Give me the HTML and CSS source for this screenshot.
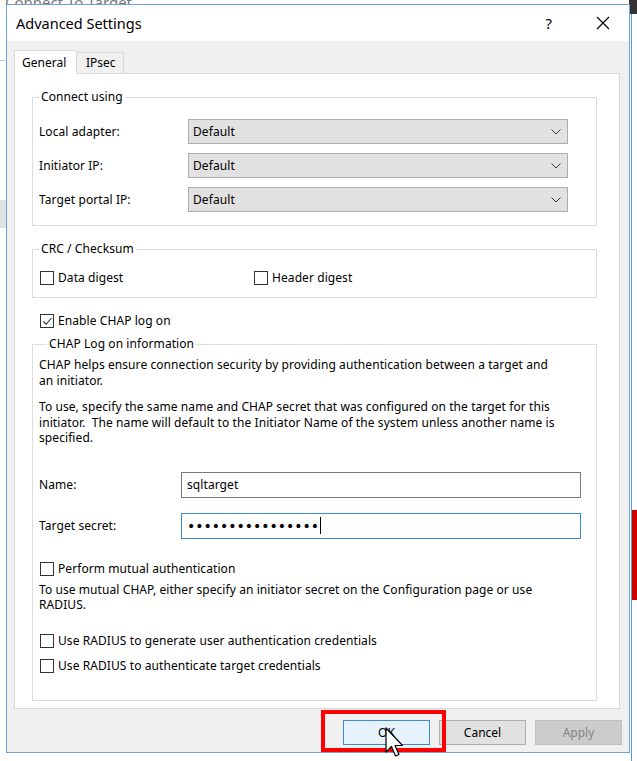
FILE: index.html
```html
<!DOCTYPE html>
<html>
<head>
<meta charset="utf-8">
<link rel="stylesheet" href="styles.css">
</head>
<body>
<div class="desktop">
  <div class="bg-window">
    <div class="bg-title">Connect To Target</div>
    <div class="bg-line l1"></div>
    <div class="bg-line l2"></div>
  </div>
  <div class="bg-right">
    <div class="bg-dark"></div>
    <div class="bg-blue"></div>
    <div class="bg-red"></div>
  </div>

  <div class="dialog">
    <div class="titlebar">
      <span class="title">Advanced Settings</span>
      <span class="help">?</span>
      <svg class="close" width="14" height="14" viewBox="0 0 14 14"><path d="M1 1 L13 13 M13 1 L1 13" stroke="#000" stroke-width="1.2" fill="none"/></svg>
    </div>
    <div class="content">
      <div class="tabs">
        <div class="tab active">General</div>
        <div class="tab">IPsec</div>
      </div>
      <div class="panel">
        <fieldset class="group g1">
          <legend>Connect using</legend>
          <div class="rows">
            <label>Local adapter:</label>
            <div class="select"><span>Default</span><svg width="10" height="6" viewBox="0 0 10 6"><path d="M0.5 0.5 L5 5 L9.5 0.5" stroke="#333" fill="none"/></svg></div>
            <label>Initiator IP:</label>
            <div class="select"><span>Default</span><svg width="10" height="6" viewBox="0 0 10 6"><path d="M0.5 0.5 L5 5 L9.5 0.5" stroke="#333" fill="none"/></svg></div>
            <label>Target portal IP:</label>
            <div class="select"><span>Default</span><svg width="10" height="6" viewBox="0 0 10 6"><path d="M0.5 0.5 L5 5 L9.5 0.5" stroke="#333" fill="none"/></svg></div>
          </div>
        </fieldset>

        <fieldset class="group g2">
          <legend>CRC / Checksum</legend>
          <div class="checks">
            <div class="check"><span class="box"></span>Data digest</div>
            <div class="check"><span class="box"></span>Header digest</div>
          </div>
        </fieldset>

        <div class="check enable"><span class="box checked"><svg width="11" height="11" viewBox="0 0 11 11"><path d="M1.5 5.5 L4.2 8.3 L9.5 2" stroke="#222" stroke-width="1.1" fill="none"/></svg></span>Enable CHAP log on</div>

        <fieldset class="group g3">
          <legend>CHAP Log on information</legend>
          <p class="p1">CHAP helps ensure connection security by providing authentication between a target and<br>an initiator.</p>
          <p class="p2">To use, specify the same name and CHAP secret that was configured on the target for this<br>initiator.&nbsp; The name will default to the Initiator Name of the system unless another name is<br>specified.</p>
          <div class="field name">
            <label>Name:</label>
            <div class="input">sqltarget</div>
          </div>
          <div class="field secret">
            <label>Target secret:</label>
            <div class="input focus"><span class="dots">••••••••••••••••</span><span class="caret"></span></div>
          </div>
          <div class="check mutual"><span class="box"></span>Perform mutual authentication</div>
          <p class="p3">To use mutual CHAP, either specify an initiator secret on the Configuration page or use<br>RADIUS.</p>
          <div class="check r1"><span class="box"></span>Use RADIUS to generate user authentication credentials</div>
          <div class="check r2"><span class="box"></span>Use RADIUS to authenticate target credentials</div>
        </fieldset>
      </div>
      <div class="buttons">
        <div class="btn ok">OK</div>
        <div class="btn">Cancel</div>
        <div class="btn disabled">Apply</div>
      </div>
    </div>
  </div>

  <div class="highlight"></div>
  <svg class="cursor" width="20" height="34" viewBox="0 0 20 34"><path d="M1 1 L1 25 L6.5 19.5 L10.5 29 L14 27.5 L10 18.5 L17.5 18.5 Z" fill="#fff" stroke="#000" stroke-width="1.2" stroke-linejoin="round"/></svg>
</div>
</body>
</html>
```

FILE: styles.css
```css
* { box-sizing: border-box; }
html, body { margin: 0; padding: 0; }
body {
  width: 637px;
  height: 761px;
  overflow: hidden;
  background: #ffffff;
  font-family: "Noto Sans", "Open Sans", Arial, sans-serif;
  font-size: 12px;
  color: #000;
}
.desktop {
  position: relative;
  width: 637px;
  height: 761px;
  overflow: hidden;
  background: #fff;
}
.bg-window {
  position: absolute;
  left: 0; top: 0;
  width: 637px; height: 761px;
}
.bg-title {
  position: absolute;
  left: 5px; top: -8px;
  font-size: 15px;
  color: #777;
}
.bg-line { position: absolute; background: #c8c8c8; }
.bg-line.l1 { left: 0; top: 60px; width: 6px; height: 1px; }
.bg-line.l2 { left: 0; top: 200px; width: 6px; height: 28px; background: #e2e2e2; }
.bg-right {
  position: absolute;
  left: 629px; top: 0;
  width: 8px; height: 761px;
}
.bg-dark { position: absolute; left: 0; top: 0; width: 8px; height: 14px; background: #333; }
.bg-blue { position: absolute; left: 2px; top: 14px; width: 1px; height: 747px; background: #5b9bd5; }
.bg-red { position: absolute; left: 3px; top: 510px; width: 5px; height: 90px; background: #c00; }

.dialog {
  position: absolute;
  left: 6px; top: 4px;
  width: 624px; height: 749px;
  border: 1px solid #6aa4d8;
  background: #f0f0f0;
  display: flex;
  flex-direction: column;
}
.titlebar {
  height: 36px;
  background: #fff;
  display: flex;
  align-items: center;
  padding-left: 9px;
  flex: none;
}
.title { font-size: 14.5px; flex: 1; }
.help { font-size: 15px; margin-right: 44px; }
.close { margin-right: 19px; }

.content {
  flex: 1;
  padding: 9px 9px 0 7px;
  display: flex;
  flex-direction: column;
}
.tabs {
  display: flex;
  align-items: flex-end;
  height: 23px;
  position: relative;
  z-index: 1;
}
.tab {
  height: 21px;
  padding: 0 9px;
  border: 1px solid #d9d9d9;
  border-bottom: none;
  background: #f0f0f0;
  display: flex;
  align-items: center;
  line-height: 1;
}
.tab.active {
  height: 24px;
  margin-bottom: -1px;
  background: #fff;
  padding: 0 7px 0 7px;
  width: 62px;
  border-right: none;
}
.tab + .tab { width: 48px; }

.panel {
  height: 636px;
  background: #fff;
  border: 1px solid #d9d9d9;
  padding: 15px 22px 0 17px;
  letter-spacing: 0.08px;
}

.group {
  margin: 0;
  border: 1px solid #dcdcdc;
  padding: 0 6px;
  min-width: 0;
}
.group legend {
  padding: 0 2px;
  line-height: 16px;
  margin-left: 0;
}
.g1 { padding-top: 14px; padding-bottom: 13px; }
.rows {
  display: grid;
  grid-template-columns: 149px 380px;
  row-gap: 9px;
  align-items: center;
}
.select {
  height: 25px;
  background: #e1e1e1;
  border: 1px solid #adadad;
  display: flex;
  align-items: center;
  justify-content: space-between;
  padding: 0 6px 0 4px;
}

.g2 { margin-top: 15px; padding-top: 13px; padding-bottom: 11px; }
.checks {
  display: grid;
  grid-template-columns: 214px auto;
}
.check {
  display: flex;
  align-items: center;
  height: 16px;
  line-height: 16px;
  margin-left: 1px;
}
.box {
  width: 14px; height: 14px;
  border: 1px solid #333;
  background: #fff;
  margin-right: 4px;
  display: flex;
  align-items: center;
  justify-content: center;
  flex: none;
}
.enable { margin: 15px 0 0 8px; }

.g3 { margin-top: 7px; padding-top: 5px; padding-bottom: 26px; }
.g3 legend { margin-left: 8px; }
.g3 p { margin: 0; line-height: 15.5px; }
.p2 { margin-top: 11px !important; }
.field {
  display: grid;
  grid-template-columns: 142px 400px;
  align-items: center;
}
.name { margin-top: 26px; }
.secret { margin-top: 15px; }
.input {
  height: 26px;
  border: 1px solid #7a7a7a;
  background: #fff;
  display: flex;
  align-items: center;
  padding: 0 5px;
}
.input.focus { border-color: #3b8bd0; }
.dots { font-size: 14px; letter-spacing: 0; font-family: "DejaVu Sans", sans-serif; }
.caret { width: 1px; height: 17px; background: #000; margin-left: 1px; }
.mutual { margin-top: 22px; }
.p3 { margin-top: 5px !important; }
.r1 { margin-top: 20px; }
.r2 { margin-top: 9px; }

.buttons {
  display: flex;
  justify-content: flex-end;
  gap: 9px;
  padding: 11px 0 0 0;
  margin-right: -2px;
}
.btn {
  width: 87px;
  height: 25px;
  background: #e1e1e1;
  border: 1px solid #adadad;
  display: flex;
  align-items: center;
  justify-content: center;
}
.btn.ok { background: #e5f1fb; border-color: #3c8ad0; }
.btn.disabled { background: #cccccc; border-color: #bfbfbf; color: #838383; }

.highlight {
  position: absolute;
  left: 321px; top: 710px;
  width: 125px; height: 42px;
  border: 4px solid #ff0000;
}
.cursor {
  position: absolute;
  left: 385px; top: 727px;
}
```
